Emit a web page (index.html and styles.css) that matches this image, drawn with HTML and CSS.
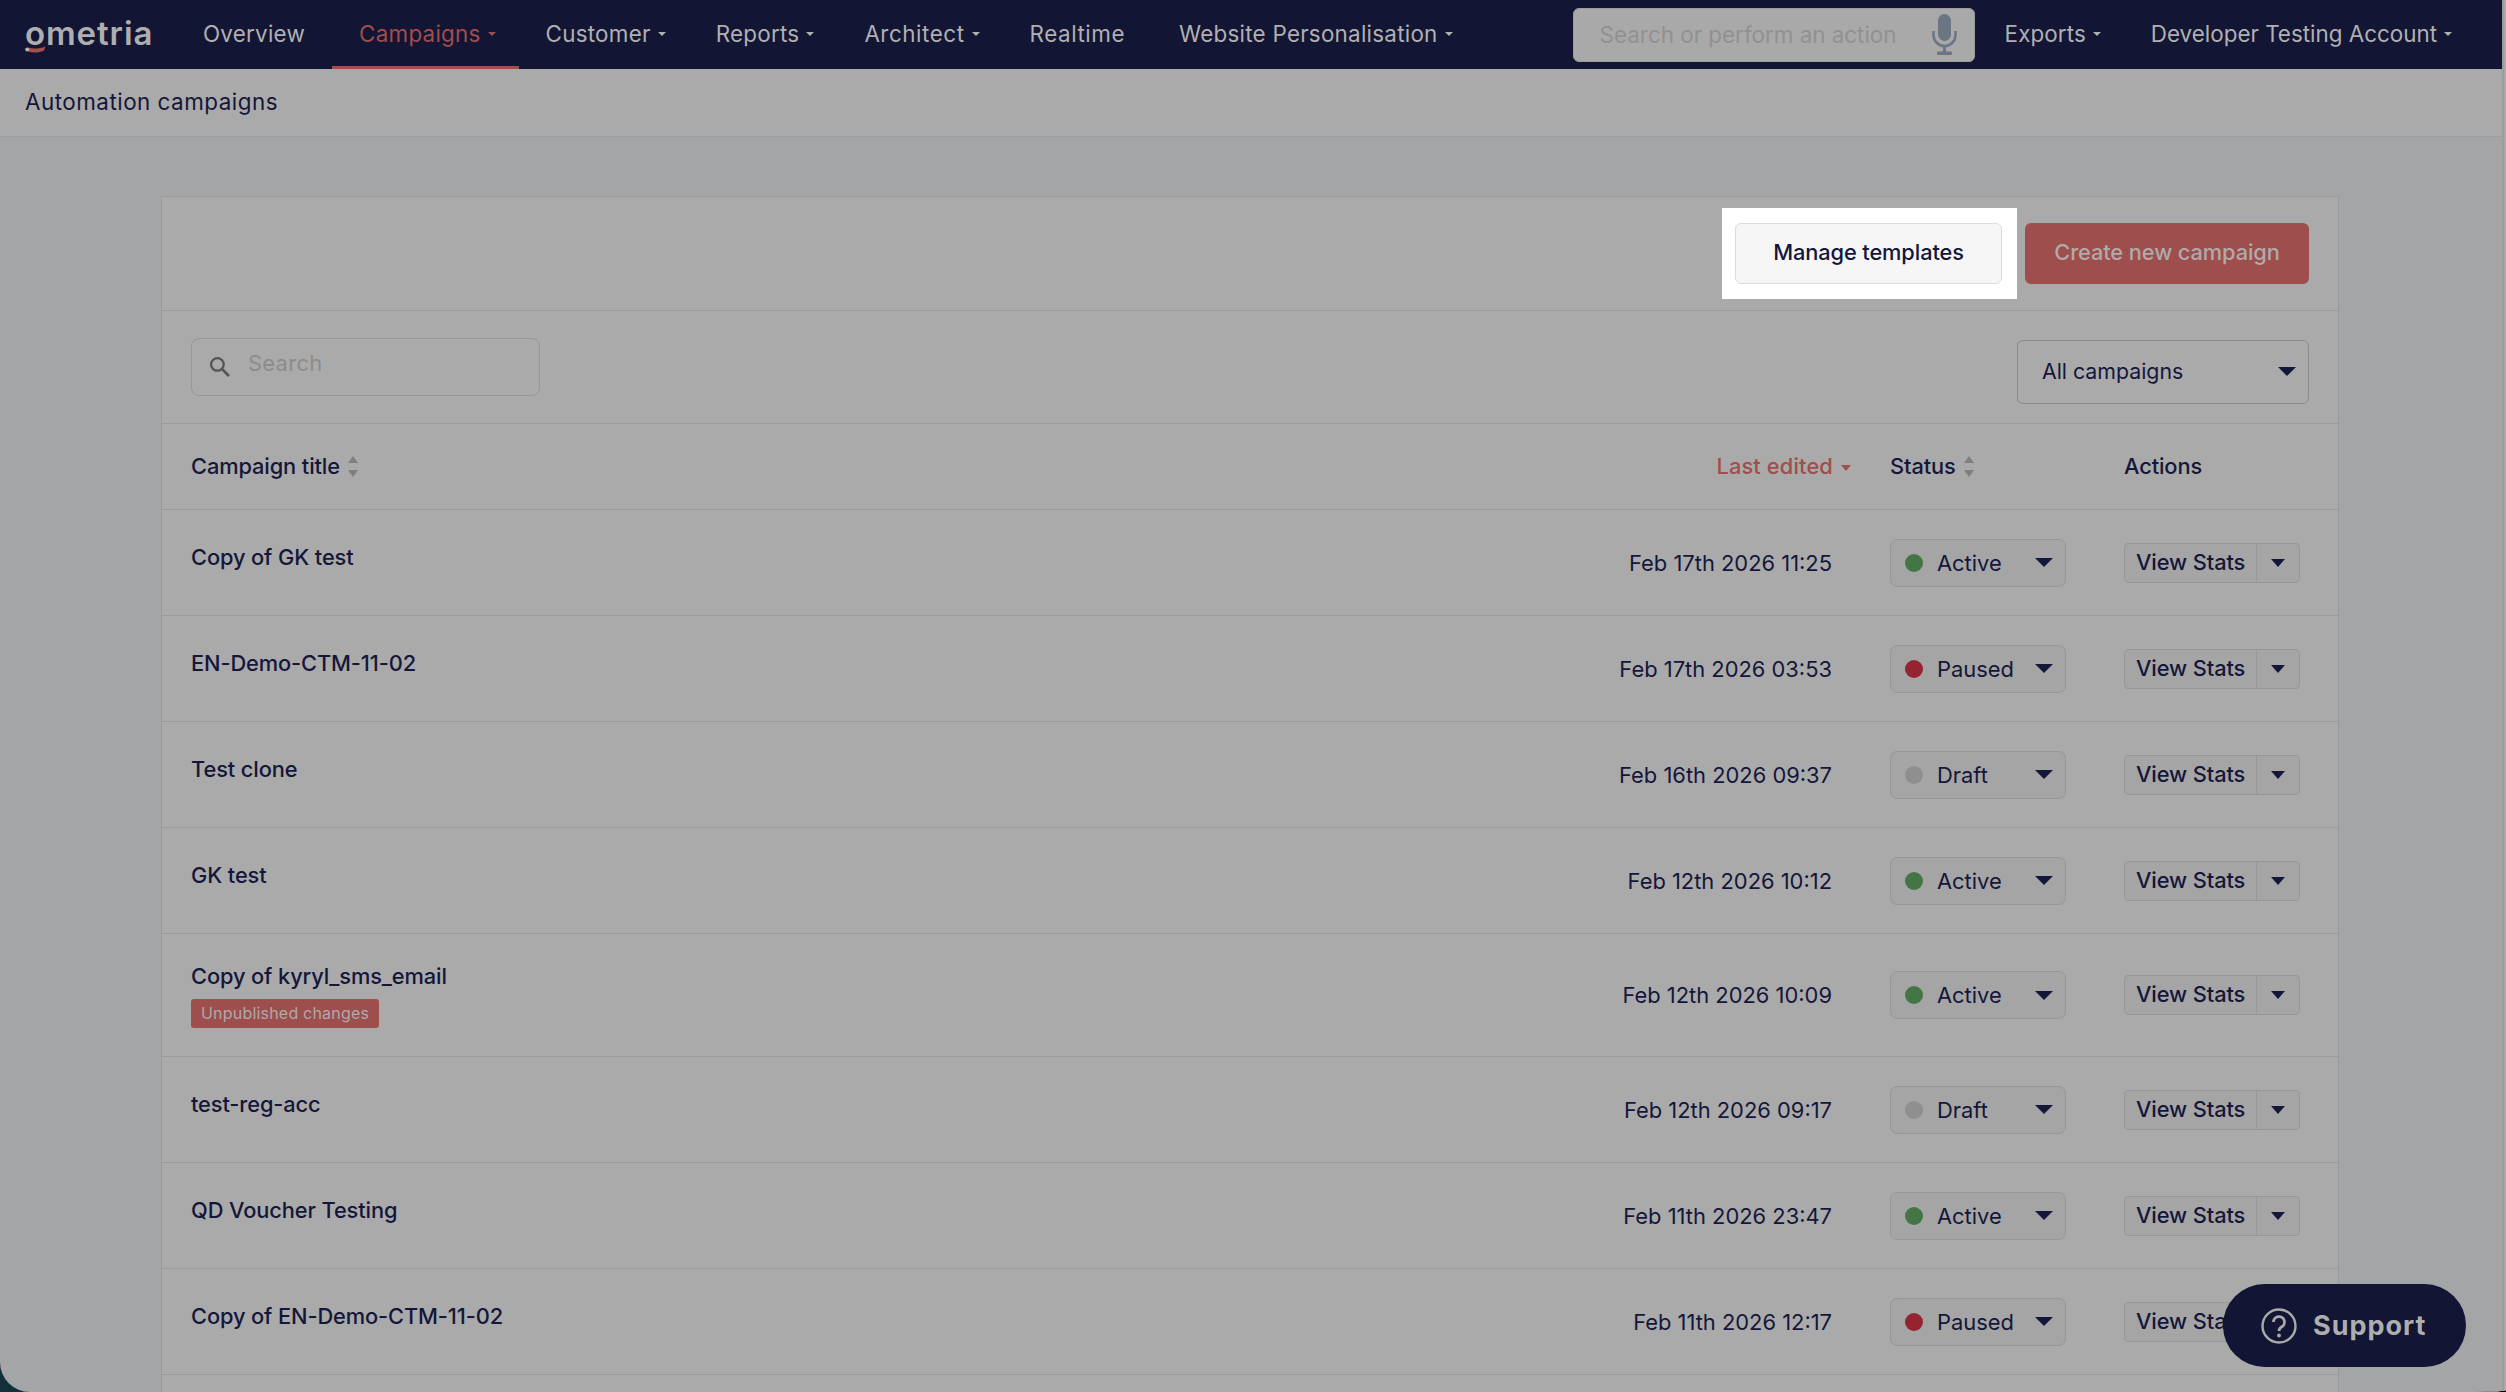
FILE: index.html
```html
<!DOCTYPE html>
<html lang="en">
<head>
    <meta charset="UTF-8">
    <meta name="viewport" content="width=device-width, initial-scale=1.0">
    <title>Automation campaigns</title>
    <link rel="stylesheet" href="styles.css">
</head>
<body>
    <div class="screen">
        <nav class="navbar">
            <a class="logo">ometria<svg class="logo-smile" viewBox="0 0 21 7"><path d="M3 1.5 C8 3 14 3 20.5 .5 L19 4.5 C14 7 8 7 3 5.5 Z" fill="#a5504a"/><circle cx="2.2" cy="3.6" r="2" fill="#b5b5b5"/></svg></a>
            <a class="nav-item">Overview</a>
            <a class="nav-item has-caret active">Campaigns<i class="nav-caret"></i></a>
            <a class="nav-item has-caret">Customer<i class="nav-caret"></i></a>
            <a class="nav-item has-caret">Reports<i class="nav-caret"></i></a>
            <a class="nav-item has-caret wide">Architect<i class="nav-caret"></i></a>
            <a class="nav-item wide">Realtime</a>
            <a class="nav-item has-caret">Website Personalisation<i class="nav-caret"></i></a>
            <div class="nav-search">
                <span>Search or perform an action</span>
                <svg class="mic" viewBox="0 0 25 41"><rect x="6" y="0" width="13" height="27" rx="6.5" fill="#6b7685"/><path d="M1.5 17 V21 A11 11 0 0 0 23.5 21 V17" fill="none" stroke="#6b7685" stroke-width="2.6"/><rect x="11" y="31" width="3" height="7" fill="#6b7685"/><rect x="5" y="37.5" width="15" height="3.5" rx="1" fill="#6b7685"/></svg>
            </div>
            <a class="nav-item nav-exports has-caret">Exports<i class="nav-caret"></i></a>
            <a class="nav-item nav-account has-caret">Developer Testing Account<i class="nav-caret"></i></a>
        </nav>
        <div class="subheader">Automation campaigns</div>
        <main class="content">
            <div class="card">
                <div class="card-top">
                    <div class="spotlight"><button class="btn-manage">Manage templates</button></div>
                    <button class="btn-create">Create new campaign</button>
                </div>
                <div class="filters">
                    <div class="search-box">
                        <svg class="search-icon" viewBox="0 0 20 20"><circle cx="8" cy="8" r="6" fill="none" stroke="#555" stroke-width="2.2"/><path d="M12.5 12.5 L19 19" stroke="#555" stroke-width="2.6"/></svg>
                        <span>Search</span>
                    </div>
                    <div class="filter-select">All campaigns<i class="caret caret-big"></i></div>
                </div>
                <table>
                    <thead>
                        <tr>
                            <th class="col-title"><span class="sortable">Campaign title<i class="sort"></i></span></th>
                            <th class="col-date sorted">Last edited<i class="sorted-caret"></i></th>
                            <th class="col-status"><span class="sortable">Status<i class="sort"></i></span></th>
                            <th class="col-actions">Actions</th>
                        </tr>
                    </thead>
                    <tbody>
                        <tr>
                            <td class="col-title"><div class="name">Copy of GK test</div></td>
                            <td class="col-date">Feb 17th 2026 11:25</td>
                            <td><div class="status"><i class="dot active"></i>Active<i class="caret"></i></div></td>
                            <td><div class="stats"><span>View Stats</span><b><i class="caret caret-small"></i></b></div></td>
                        </tr>
                        <tr>
                            <td class="col-title"><div class="name">EN-Demo-CTM-11-02</div></td>
                            <td class="col-date">Feb 17th 2026 03:53</td>
                            <td><div class="status"><i class="dot paused"></i>Paused<i class="caret"></i></div></td>
                            <td><div class="stats"><span>View Stats</span><b><i class="caret caret-small"></i></b></div></td>
                        </tr>
                        <tr>
                            <td class="col-title"><div class="name">Test clone</div></td>
                            <td class="col-date">Feb 16th 2026 09:37</td>
                            <td><div class="status"><i class="dot draft"></i>Draft<i class="caret"></i></div></td>
                            <td><div class="stats"><span>View Stats</span><b><i class="caret caret-small"></i></b></div></td>
                        </tr>
                        <tr>
                            <td class="col-title"><div class="name">GK test</div></td>
                            <td class="col-date">Feb 12th 2026 10:12</td>
                            <td><div class="status"><i class="dot active"></i>Active<i class="caret"></i></div></td>
                            <td><div class="stats"><span>View Stats</span><b><i class="caret caret-small"></i></b></div></td>
                        </tr>
                        <tr class="row-tall">
                            <td class="col-title"><div class="name">Copy of kyryl_sms_email</div><span class="tag">Unpublished changes</span></td>
                            <td class="col-date">Feb 12th 2026 10:09</td>
                            <td><div class="status"><i class="dot active"></i>Active<i class="caret"></i></div></td>
                            <td><div class="stats"><span>View Stats</span><b><i class="caret caret-small"></i></b></div></td>
                        </tr>
                        <tr>
                            <td class="col-title"><div class="name">test-reg-acc</div></td>
                            <td class="col-date">Feb 12th 2026 09:17</td>
                            <td><div class="status"><i class="dot draft"></i>Draft<i class="caret"></i></div></td>
                            <td><div class="stats"><span>View Stats</span><b><i class="caret caret-small"></i></b></div></td>
                        </tr>
                        <tr>
                            <td class="col-title"><div class="name">QD Voucher Testing</div></td>
                            <td class="col-date">Feb 11th 2026 23:47</td>
                            <td><div class="status"><i class="dot active"></i>Active<i class="caret"></i></div></td>
                            <td><div class="stats"><span>View Stats</span><b><i class="caret caret-small"></i></b></div></td>
                        </tr>
                        <tr>
                            <td class="col-title"><div class="name">Copy of EN-Demo-CTM-11-02</div></td>
                            <td class="col-date">Feb 11th 2026 12:17</td>
                            <td><div class="status"><i class="dot paused"></i>Paused<i class="caret"></i></div></td>
                            <td><div class="stats"><span>View Stats</span><b><i class="caret caret-small"></i></b></div></td>
                        </tr>
                    </tbody>
                </table>
            </div>
        </main>
        <button class="support">
            <svg class="support-icon" viewBox="0 0 36 36"><circle cx="18" cy="18" r="16.5" fill="none" stroke="#aaa" stroke-width="2.4"/><path d="M12.5 14 A5.5 5.5 0 1 1 20.5 19 C18.7 20 18 20.8 18 23" fill="none" stroke="#aaa" stroke-width="2.8"/><circle cx="18" cy="27.5" r="1.9" fill="#aaa"/></svg>
            Support
        </button>
    </div>
</body>
</html>
```

FILE: styles.css
```css
html, body {
    margin: 0;
    height: 100%;
    background: linear-gradient(90deg, #12303a 0, #12303a 60px, #000 120px);
    overflow: hidden;
}
.screen {
    position: relative;
    display: flex;
    flex-direction: column;
    height: 1392px;
    overflow: hidden;
    padding-right: 4px;
    box-sizing: border-box;
    background-color: #a4a5a7;
    box-shadow: inset -2px 0 #a9a9a9, inset -4px 0 #9c9c9c;
    border-bottom-left-radius: 30px;
    border-bottom-right-radius: 30px 2px;
    font-family: Inter, "Liberation Sans", sans-serif;
    font-size: 21.9px;
    color: #14163a;
}
i {
    display: inline-block;
}
button {
    font-family: inherit;
}

/* top bar */
.navbar {
    display: flex;
    align-items: center;
    flex: none;
    height: 69px;
    padding-left: 25px;
    background-color: #131535;
    color: #b0b0b0;
    font-size: 22.4px;
}
.logo {
    position: relative;
    width: 151px;
    padding-bottom: 3px;
    font-size: 33px;
    font-weight: 600;
    letter-spacing: 0.9px;
    color: #aeaeae;
    line-height: 40px;
}
.logo-smile {
    position: absolute;
    left: 0;
    top: 33px;
    width: 21px;
    height: 7px;
}
.nav-item {
    display: flex;
    align-items: center;
    box-sizing: border-box;
    height: 69px;
    padding: 0 27px 2px;
    letter-spacing: 0.25px;
}
.nav-item.wide {
    letter-spacing: 0.55px;
}
.nav-item.has-caret {
    padding-right: 23px;
}
.nav-caret {
    width: 0;
    height: 0;
    margin-left: 7px;
    border-left: 4px solid transparent;
    border-right: 4px solid transparent;
    border-top: 4px solid #b0b0b0;
}
.nav-item.active {
    color: #a04d4c;
    border-bottom: 3px solid #a04d4c;
    padding-top: 1px;
    padding-bottom: 0;
}
.nav-item.active .nav-caret {
    border-top-color: #a04d4c;
}
.nav-search {
    display: flex;
    align-items: center;
    justify-content: space-between;
    box-sizing: border-box;
    width: 402px;
    height: 54px;
    margin-left: auto;
    padding: 0 17px 0 26px;
    background-color: #a9a9a9;
    border: 1px solid #9c9c9c;
    border-radius: 6px;
    color: #919191;
}
.mic {
    width: 25px;
    height: 41px;
}
.nav-item.nav-exports {
    padding-left: 30px;
    letter-spacing: 0.1px;
}
.nav-item.nav-account {
    padding-left: 27px;
    padding-right: 50px;
    letter-spacing: 0;
}

/* page heading */
.subheader {
    display: flex;
    align-items: center;
    flex: none;
    box-sizing: border-box;
    height: 68px;
    padding: 0 0 3px 25px;
    background-color: #aaaaaa;
    border-bottom: 1px solid #9a9da3;
    font-size: 22.4px;
    letter-spacing: 0.5px;
}
.content {
    flex: 1;
    display: flex;
    min-height: 0;
    padding: 59px 163px 0 161px;
}
.card {
    flex: 1;
    box-sizing: border-box;
    background-color: #aaaaaa;
    border: 1px solid #9b9b9b;
    border-bottom: 0;
}
.card-top {
    display: flex;
    justify-content: flex-end;
    align-items: center;
    box-sizing: border-box;
    height: 114px;
    padding-right: 29px;
    border-bottom: 1px solid #9b9b9b;
}
.spotlight {
    margin-right: 8px;
    padding: 15px 15px 15px 13px;
    background-color: #fff;
}
.btn-manage, .btn-create {
    display: block;
    height: 61px;
    padding: 0 0 3px;
    border-radius: 6px;
    font-size: 21.8px;
    font-weight: 500;
    letter-spacing: -0.1px;
}
.btn-manage {
    width: 267px;
    background-color: #f6f6f7;
    border: 1px solid #dcdcdc;
    color: #14163a;
}
.btn-create {
    width: 284px;
    background-color: #9e4e4c;
    border: 0;
    color: #b0aaaa;
}
.filters {
    display: flex;
    justify-content: space-between;
    align-items: flex-start;
    box-sizing: border-box;
    height: 113px;
    padding: 27px 29px 0 29px;
    border-bottom: 1px solid #9b9b9b;
}
.search-box {
    display: flex;
    align-items: center;
    box-sizing: border-box;
    width: 349px;
    height: 58px;
    padding: 0 0 8px 17px;
    border: 1px solid #979797;
    border-radius: 8px;
    color: #8c8c8c;
    letter-spacing: 0.3px;
}
.search-icon {
    width: 21px;
    height: 21px;
    margin: 6px 18px 0 0;
}
.filter-select {
    display: flex;
    align-items: center;
    box-sizing: border-box;
    width: 292px;
    height: 64px;
    margin-top: 2px;
    padding: 0 12px 2px 24px;
    border: 1px solid #8b8b8b;
    border-radius: 6px;
    font-size: 21.3px;
}

/* triangles */
.caret {
    width: 0;
    height: 0;
    border-left: 9px solid transparent;
    border-right: 9px solid transparent;
    border-top: 9px solid #14163a;
    margin-left: auto;
}
.caret-small {
    border-left-width: 7.5px;
    border-right-width: 7.5px;
    border-top-width: 8px;
}

/* table */
table {
    width: 100%;
    border-collapse: collapse;
    table-layout: fixed;
}
th {
    height: 84px;
    padding: 0 0 1px;
    font-size: 21.8px;
    font-weight: 500;
    letter-spacing: -0.1px;
    text-align: left;
}
td {
    height: 105px;
    padding: 0;
    white-space: nowrap;
}
tr {
    border-bottom: 1px solid #9b9b9b;
}
.row-tall td {
    height: 122px;
}
.col-title {
    padding-left: 29px;
}
th.col-date {
    width: 280px;
    padding-right: 39px;
    text-align: right;
    letter-spacing: 0.15px;
    color: #a04d4c;
}
td.col-date {
    padding-right: 58px;
    text-align: right;
}
.col-status {
    width: 234px;
}
.col-actions {
    width: 214px;
}
.sortable {
    display: inline-flex;
    align-items: center;
}
.sort {
    position: relative;
    width: 11px;
    height: 21px;
    margin-left: 8px;
}
.sort:before, .sort:after {
    content: "";
    position: absolute;
    left: 0;
    width: 0;
    height: 0;
    border-left: 5.5px solid transparent;
    border-right: 5.5px solid transparent;
}
.sort:before {
    top: 0;
    border-bottom: 7px solid #7f7f7f;
}
.sort:after {
    bottom: 0;
    border-top: 7px solid #7f7f7f;
}
.sorted-caret {
    width: 0;
    height: 0;
    margin-left: 8px;
    vertical-align: middle;
    border-left: 5.5px solid transparent;
    border-right: 5.5px solid transparent;
    border-top: 6px solid #a04d4c;
}
.name {
    margin-bottom: 11px;
    font-size: 21.8px;
    font-weight: 500;
    letter-spacing: -0.1px;
    line-height: 32px;
}
.tag {
    display: inline-block;
    box-sizing: border-box;
    height: 29px;
    margin: -4px 0 3px;
    padding: 0 10px;
    background-color: #9e4e4c;
    border-radius: 3px;
    color: #aeaaaa;
    font-size: 16px;
    letter-spacing: 0.2px;
    line-height: 29px;
    vertical-align: top;
}
.status {
    display: flex;
    align-items: center;
    box-sizing: border-box;
    width: 176px;
    height: 48px;
    padding: 0 12px 0 14px;
    background-color: #a5a5a5;
    border: 1px solid #979797;
    border-radius: 7px;
}
.dot {
    width: 18px;
    height: 18px;
    margin-right: 14px;
    border-radius: 50%;
}
.dot.active { background-color: #447545; }
.dot.paused { background-color: #952430; }
.dot.draft { background-color: #8f8f8f; }
.stats {
    display: flex;
    box-sizing: border-box;
    width: 176px;
    height: 40px;
    background-color: #a5a5a5;
    border: 1px solid #979797;
    border-radius: 4px;
    font-size: 21.8px;
    font-weight: 500;
    letter-spacing: -0.1px;
}
.stats span {
    flex: 1;
    padding-left: 11px;
    line-height: 36px;
}
.stats b {
    display: flex;
    align-items: center;
    justify-content: center;
    width: 42px;
    border-left: 1px solid #979797;
}
.stats .caret {
    margin: 0;
}

/* help button */
.support {
    position: absolute;
    left: 2223px;
    top: 1284px;
    display: flex;
    align-items: center;
    width: 243px;
    height: 83px;
    padding: 0 0 0 38px;
    background-color: #131535;
    border: 0;
    border-radius: 42px;
    color: #aeaeae;
    font-size: 27px;
    font-weight: 700;
    letter-spacing: 1px;
}
.support-icon {
    width: 36px;
    height: 36px;
    margin-right: 16px;
}
```
